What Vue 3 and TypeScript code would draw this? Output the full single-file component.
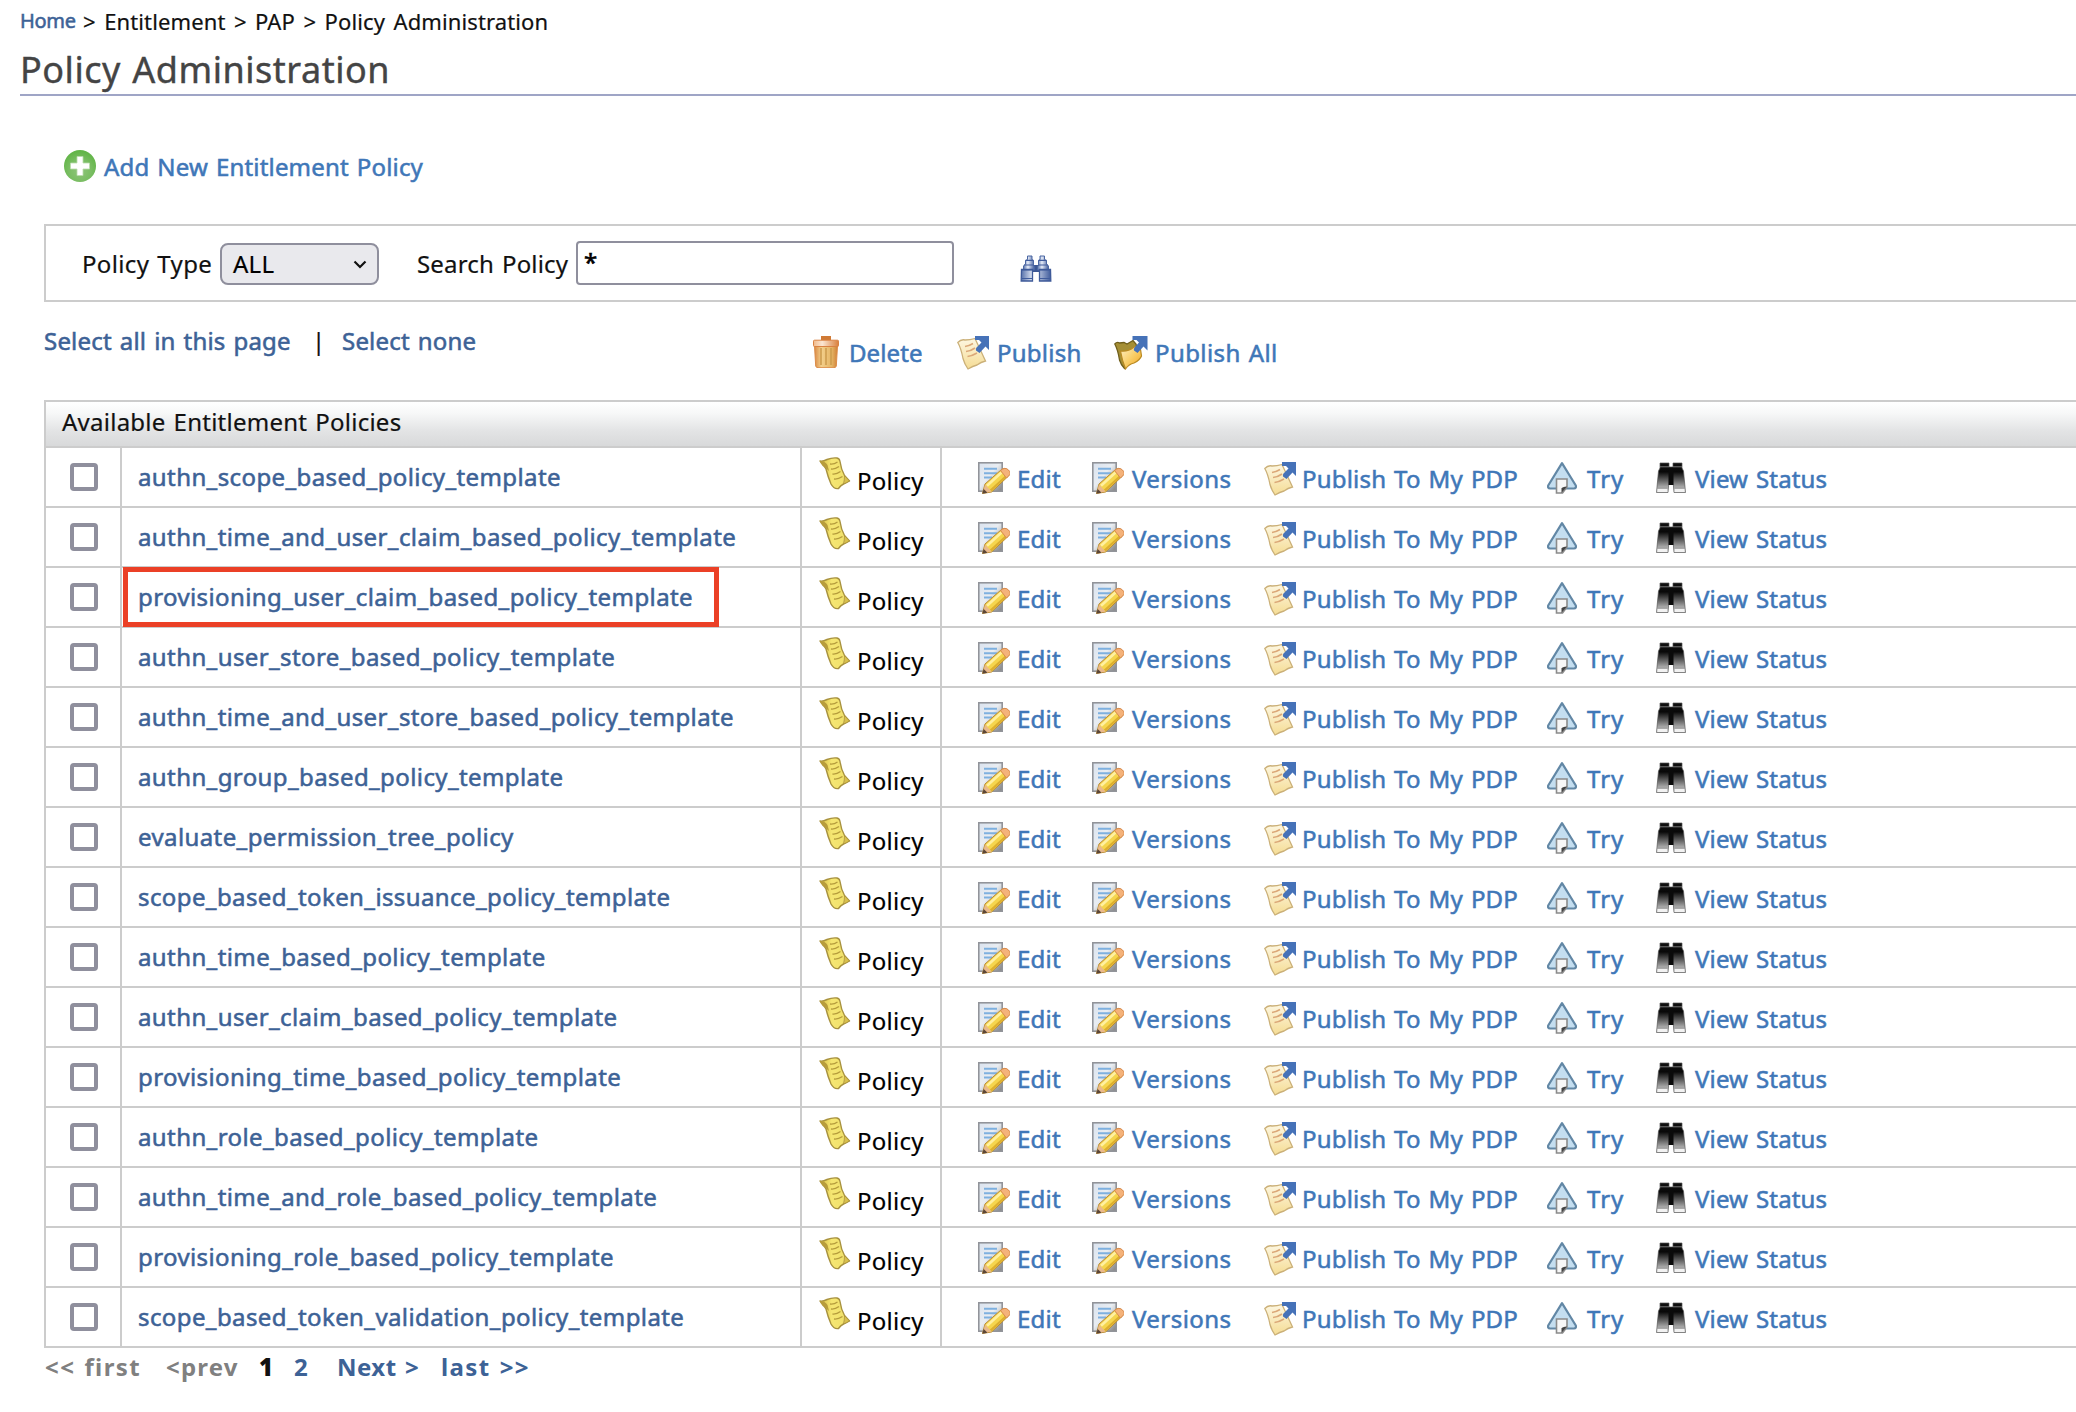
<script setup lang="ts">
import { ref } from 'vue'

interface Action {
  label: string
  icon: string
  cls: string
}

const policies: string[] = [
  'authn_scope_based_policy_template',
  'authn_time_and_user_claim_based_policy_template',
  'provisioning_user_claim_based_policy_template',
  'authn_user_store_based_policy_template',
  'authn_time_and_user_store_based_policy_template',
  'authn_group_based_policy_template',
  'evaluate_permission_tree_policy',
  'scope_based_token_issuance_policy_template',
  'authn_time_based_policy_template',
  'authn_user_claim_based_policy_template',
  'provisioning_time_based_policy_template',
  'authn_role_based_policy_template',
  'authn_time_and_role_based_policy_template',
  'provisioning_role_based_policy_template',
  'scope_based_token_validation_policy_template',
]
const highlighted = 'provisioning_user_claim_based_policy_template'

const actions: Action[] = [
  { label: 'Edit', icon: 'i-edit', cls: 'edit' },
  { label: 'Versions', icon: 'i-edit', cls: 'versions' },
  { label: 'Publish To My PDP', icon: 'i-publish', cls: 'pdp' },
  { label: 'Try', icon: 'i-try', cls: 'try' },
  { label: 'View Status', icon: 'i-view', cls: 'view' },
]

const search = ref('*')
const checked = ref<string[]>([])
</script>

<template>
  <svg class="defs" aria-hidden="true">
    <defs>
      <radialGradient id="g-add" cx=".5" cy=".65" r=".6">
        <stop offset="0" stop-color="#8fc47a" />
        <stop offset=".6" stop-color="#79bd62" />
        <stop offset="1" stop-color="#62b548" />
      </radialGradient>
      <linearGradient id="g-page" x1="0" y1="0" x2="1" y2="1">
        <stop offset="0" stop-color="#d9e2ee" />
        <stop offset=".45" stop-color="#e9edf2" />
        <stop offset="1" stop-color="#808080" />
      </linearGradient>
      <linearGradient id="g-note" x1="0" y1="0" x2="0" y2="1">
        <stop offset="0" stop-color="#fdf7e2" />
        <stop offset="1" stop-color="#f5dc94" />
      </linearGradient>
      <linearGradient id="g-folder" x1="0" y1="0" x2="1" y2="1">
        <stop offset="0" stop-color="#fdf0c8" />
        <stop offset=".5" stop-color="#f9cf6a" />
        <stop offset="1" stop-color="#f3a41c" />
      </linearGradient>
      <linearGradient id="g-can" x1="0" y1="0" x2="1" y2="0">
        <stop offset="0" stop-color="#d98a45" />
        <stop offset=".3" stop-color="#f3cf8b" />
        <stop offset=".75" stop-color="#e5b565" />
        <stop offset="1" stop-color="#d08036" />
      </linearGradient>
      <linearGradient id="g-lid" x1="0" y1="0" x2="1" y2="0">
        <stop offset="0" stop-color="#f0b98a" />
        <stop offset=".35" stop-color="#fbe6d2" />
        <stop offset="1" stop-color="#d9803c" />
      </linearGradient>
      <linearGradient id="g-view" x1="0" y1="0" x2="0" y2="1">
        <stop offset="0" stop-color="#111" />
        <stop offset=".3" stop-color="#080808" />
        <stop offset=".85" stop-color="#b4b4b4" />
        <stop offset="1" stop-color="#ddd" />
      </linearGradient>
      <linearGradient id="g-find" x1="0" y1="0" x2="1" y2="0">
        <stop offset="0" stop-color="#5671aa" />
        <stop offset=".4" stop-color="#e6ecf8" />
        <stop offset="1" stop-color="#405c9c" />
      </linearGradient>
      <linearGradient id="g-scroll" x1="0" y1="0" x2="1" y2="0">
        <stop offset="0" stop-color="#d8bd45" />
        <stop offset=".4" stop-color="#f5e672" />
        <stop offset="1" stop-color="#efdf68" />
      </linearGradient>
    </defs>
    <symbol id="i-add" viewBox="0 0 32 32">
      <circle cx="16" cy="16" r="16" fill="url(#g-add)" />
      <path d="M13 6.500h6v6.500h6.500v6H19v6.500h-6v-6.500H6.500v-6H13z" fill="#fff" stroke="#b9dcab" stroke-width=".8" />
    </symbol>
    <symbol id="i-edit" viewBox="0 0 32 32">
      <rect x=".8" y=".8" width="23.400" height="28.400" fill="url(#g-page)" stroke="#92949a" stroke-width="1.600" />
      <path d="M6 6.800h13M6 11.200h13M6 15.600h8" stroke="#7eb0df" stroke-width="2" />
      <path d="M4.500 31.500L7 22L23.500 7.500Q27 5 30 8T30.500 14L13.500 30Z" fill="#f5d54d" stroke="#b98a35" stroke-width="1" />
      <path d="M9 23.800L23.500 10.500" stroke="#fff0a0" stroke-width="2.600" />
      <path d="M12.500 28.500L27.500 14.800" stroke="#dcae2e" stroke-width="2.200" />
      <path d="M22.500 8.500Q27 4.500 30.500 8T30.500 14L28.500 16Z" fill="#f4b27a" stroke="#d98b50" stroke-width="1" />
      <path d="M7 22.500L13.500 29.500L5 31.500Z" fill="#e9b98c" />
      <path d="M5.700 27L9.500 30.800L4.300 31.800Z" fill="#5b4638" />
    </symbol>
    <symbol id="i-publish" viewBox="0 0 34 34">
      <path d="M.8 6.500Q4 3 8 4Q13 4 18 2.500L22 11L28.500 25Q24 26 20 29Q16 30 11 33Q7.500 28 6 22.500Q4 12 .8 6.500Z" fill="url(#g-note)" stroke="#cbb078" stroke-width="1.300" />
      <path d="M8 10.500Q12 10 16 7.500M9 15.500Q14 15 18 12M10.500 20.500Q15 20 20 17" fill="none" stroke="#dba878" stroke-width="1.600" />
      <path d="M18 0H32V14L28.500 10.500L22.500 17L19 14.500Q18.500 13 19.500 11.500L24.500 6.500L22 4L18 4Z" fill="#4672b8" />
    </symbol>
    <symbol id="i-folder" viewBox="0 0 34 34">
      <path d="M.8 8Q3 5.500 5.500 7L10 6.500L13 8L19 4.500L22 8L24 15L10.500 32.500Q7 29 5.500 24Q4 14 .8 8Z" fill="#a58f35" stroke="#6f5e1b" stroke-width="1.300" />
      <path d="M6.500 15Q14 16 20 11L26 10L27.500 20Q26 24 20 27Q15 28 11.500 33Q8 24 6.500 15Z" fill="url(#g-folder)" stroke="#b98a22" stroke-width="1.200" />
      <path d="M18.500 0H33.500V14.500L29.500 10.500L23.500 17L20 14.500Q19.500 13 20.500 11.500L25 6.500L22.500 4H18.500Z" fill="#4672b8" />
    </symbol>
    <symbol id="i-delete" viewBox="0 0 26 32">
      <rect x="8" y="0" width="10" height="4.500" fill="#d07a35" />
      <path d="M1.500 10H24.500L23.300 30Q23 31.700 21 31.700H5Q3 31.700 2.700 30Z" fill="url(#g-can)" stroke="#dc8c48" stroke-width="1" />
      <path d="M8 12V29M13 12V29M18 12V29" stroke="#cb9a4c" stroke-width="1.500" />
      <rect x=".5" y="4.200" width="25" height="6.300" rx="1" fill="url(#g-lid)" stroke="#d98242" stroke-width="1" />
    </symbol>
    <symbol id="i-try" viewBox="0 0 30 32">
      <path d="M15 1.200L28.800 23.500Q29.500 26.300 27 26.500H3Q.5 26.300 1.200 23.500Z" fill="#c4def0" stroke="#6287a5" stroke-width="2.200" stroke-linejoin="round" />
      <path d="M9.500 17H20V25L15.500 31H9.500Z" fill="#f7f7f7" stroke="#8b8b8b" stroke-width="1.600" />
      <path d="M20 24.500L14.500 31V26.500Q15 25 20 24.500Z" fill="#444" />
    </symbol>
    <symbol id="i-view" viewBox="0 0 30 32">
      <path d="M4 1H13V5H17V1H26V6L27.500 9L29.500 30.500H18L17 19H13L12 30.500H.5L2.500 9L4 6Z" fill="url(#g-view)" stroke="#555" stroke-width=".7" />
      <path d="M12.500 7H17.500V23H12.500z" fill="#0a0a0a" />
      <path d="M4 4.800H13M17 4.800H26" stroke="#777" stroke-width="1" />
      <path d="M1.700 26H11.500M18.500 26H28.300" stroke="#999" stroke-width="1" />
      <path d="M1.500 27H11.300V30H1.500zM18.700 27H28.500V30H18.700z" fill="#f2f2f2" />
    </symbol>
    <symbol id="i-find" viewBox="0 0 32 27">
      <path d="M12 10H20V17H12z" fill="#3c5793" />
      <path d="M7.500 1H12V4.500L13.500 5.500V9.500L14.500 11.500V15H3.500V11L5.500 9V5.500L7.500 4.500Z" fill="url(#g-find)" stroke="#4a66a2" stroke-width="1" />
      <path d="M20 1H24.500V4.500L26.500 5.500V9L28.500 11V15H17.500V11.500L18.500 9.500V5.500L20 4.500Z" fill="url(#g-find)" stroke="#4a66a2" stroke-width="1" />
      <path d="M1.500 14.500H12.500V26H1.200zM19.500 14.500H30.500L30.800 26H19.500z" fill="url(#g-find)" stroke="#3e5a99" stroke-width="1.300" />
      <path d="M5.500 5.300H13.500M18.500 5.300H26.500M4 10H14M18 10H28M1.500 15H12.500M19.500 15H30.500M1.500 23.500H12.500M19.500 23.500H30.500" stroke="#405c9c" stroke-width="1.200" />
    </symbol>
    <symbol id="i-scroll" viewBox="0 0 32 33">
      <path d="M1 4Q4 4.500 8 2.500Q13 .5 18 1Q20.500 1.500 21 4.500Q22 12 25.500 18.500L30.500 24Q27 26 24.500 27Q21.500 28.500 19.500 31.500Q15 32.500 12 27Q9 20 7 12Q5 8 1 4Z" fill="url(#g-scroll)" stroke="#a8923f" stroke-width="1.400" stroke-linejoin="round" />
      <path d="M1 4Q6 4 8.500 8L10 14L6 10.500Q3 9 1.500 6Z" fill="#b79c3c" />
      <path d="M11 7Q15 7.500 18.500 5M12 12Q16 12.500 20 9.500M13.500 17Q17.500 17.500 21.500 14.500M15 22Q19 22.500 23.500 19.500" fill="none" stroke="#b59c3c" stroke-width="1.300" />
      <path d="M25.500 18.500L30.500 24Q27 26 24.500 27Q25.500 23 25.500 18.500Z" fill="#d9c04c" stroke="#a8923f" stroke-width=".8" />
    </symbol>
  </svg>

  <div class="page">
    <nav class="crumbs"><a class="home">Home</a><span>&gt; Entitlement &gt; PAP &gt; Policy Administration</span></nav>
    <h2 class="title">Policy Administration</h2>

    <main class="work">
      <a class="add link"><svg><use href="#i-add" /></svg><span>Add New Entitlement Policy</span></a>

      <form class="filter" @submit.prevent>
        <label class="l-type">Policy Type</label>
        <div class="select"><span>ALL</span><svg viewBox="0 0 14 9"><path d="M1.500 1.500L7 7L12.500 1.500" fill="none" stroke="#111" stroke-width="2.200" /></svg></div>
        <label class="l-search">Search Policy</label>
        <input v-model="search" type="text" class="search" />
        <svg class="find"><use href="#i-find" /></svg>
      </form>

      <div class="toolbar">
        <div class="selectors"><a class="s-all">Select all in this page</a><span class="bar">|</span><a>Select none</a></div>
        <div class="bulk link">
          <a class="b-del"><svg><use href="#i-delete" /></svg><span>Delete</span></a>
          <a class="b-pub"><svg><use href="#i-publish" /></svg><span>Publish</span></a>
          <a class="b-all"><svg><use href="#i-folder" /></svg><span>Publish All</span></a>
        </div>
      </div>

      <section class="grid">
        <header>Available Entitlement Policies</header>
        <div v-for="p in policies" :key="p" class="row">
          <div class="c-check"><input v-model="checked" type="checkbox" :value="p" /></div>
          <div class="c-name" :class="{ marked: p === highlighted }"><a>{{ p }}</a></div>
          <div class="c-type"><svg><use href="#i-scroll" /></svg><span>Policy</span></div>
          <div class="c-actions link">
            <a v-for="a in actions" :key="a.label" :class="a.cls"><svg><use :href="'#' + a.icon" /></svg><span>{{ a.label }}</span></a>
          </div>
        </div>
      </section>

      <div class="pager">
        <span class="off first">&lt;&lt; first</span><span class="off prev">&lt;prev</span><b class="cur">1</b><a class="two">2</a><a class="next">Next &gt;</a><a class="last">last &gt;&gt;</a>
      </div>
    </main>
  </div>
</template>

<style>
body {
  margin: 0;
  background: #fff;
  overflow: hidden;
}
</style>

<style scoped>
.defs {
  position: absolute;
  width: 0;
  height: 0;
}
.page {
  box-sizing: border-box;
  height: 1412px;
  padding-left: 20px;
  overflow: hidden;
  color: #111;
  font: 24px/30px "Noto Sans", "Open Sans", sans-serif;
  letter-spacing: 0.25px;
  word-spacing: 1.5px;
  white-space: nowrap;
  -webkit-text-stroke: 0.2px currentColor;
}
svg {
  display: block;
  flex: none;
}
a {
  color: #3d6296;
  -webkit-text-stroke: 0.55px currentColor;
}
.link a,
a.link {
  color: #3f77b8;
}
.crumbs {
  display: flex;
  height: 44px;
  padding-top: 6px;
  box-sizing: border-box;
  font-size: 22px;
}
.home {
  width: 63px;
  font-size: 20px;
  letter-spacing: -0.3px;
}
.crumbs span {
  word-spacing: 2.6px;
  letter-spacing: 0.12px;
}
.title {
  box-sizing: border-box;
  height: 52px;
  margin: 0;
  border-bottom: 2px solid #9fa5c6;
  color: #444;
  font-size: 36px;
  font-weight: 400;
  line-height: 52px;
  letter-spacing: 0.52px;
  -webkit-text-stroke: 0.4px currentColor;
}
.work {
  padding-left: 24px;
}
.add {
  display: flex;
  height: 128px;
  padding: 54px 0 0 20px;
  box-sizing: border-box;
}
.add svg {
  width: 32px;
  height: 32px;
}
.add span {
  margin: 2px 0 0 8px;
  letter-spacing: 0.18px;
}
.filter {
  display: flex;
  box-sizing: border-box;
  width: 2100px;
  height: 78px;
  padding: 15px 0 0 36px;
  border: 2px solid #ccc;
}
.l-type {
  width: 138px;
  padding-top: 8px;
  letter-spacing: 0.35px;
}
.select {
  display: flex;
  align-items: center;
  justify-content: space-between;
  box-sizing: border-box;
  width: 159px;
  height: 42px;
  margin-top: 2px;
  padding: 0 10px 0 11px;
  border: 2px solid #8f8f9d;
  border-radius: 8px;
  background: #e9e9ed;
  color: #000;
}
.select svg {
  width: 14px;
  height: 9px;
}
.l-search {
  width: 159px;
  padding: 8px 0 0 38px;
  letter-spacing: 0.18px;
}
.search {
  box-sizing: border-box;
  width: 378px;
  height: 44px;
  padding: 0 6px 4px;
  border: 2px solid #8f8f9d;
  border-radius: 4px;
  outline: none;
  color: #000;
  font: 24px "Noto Sans", sans-serif;
  -webkit-text-stroke: 0.6px #000;
}
.find {
  width: 32px;
  height: 27px;
  margin: 14px 0 0 66px;
}
.toolbar {
  display: flex;
  height: 98px;
}
.selectors {
  display: flex;
  width: 768px;
  padding-top: 24px;
  letter-spacing: 0.2px;
}
.s-all {
  width: 268px;
}
.bar {
  width: 30px;
}
.bulk {
  display: flex;
  padding-top: 34px;
}
.bulk a {
  display: flex;
}
.bulk span {
  margin-top: 2px;
}
.b-del {
  width: 145px;
}
.b-del svg {
  width: 28px;
  height: 32px;
  margin-right: 9px;
}
.b-del span {
  letter-spacing: 0.1px;
}
.b-pub {
  width: 157px;
}
.b-pub svg,
.b-all svg {
  width: 34px;
  height: 34px;
  margin-right: 6px;
}
.b-all svg {
  margin-right: 7px;
}
.b-all span {
  letter-spacing: 0.4px;
}
.grid {
  box-sizing: border-box;
  width: 2100px;
  border: 2px solid #ccc;
  border-bottom: 0;
}
.grid header {
  height: 44px;
  padding-left: 16px;
  border-bottom: 2px solid #ccc;
  background: linear-gradient(#fff 0%, #f7f8f8 25%, #e3e4e5 65%, #d8d9da 100%);
  line-height: 40px;
}
.row {
  display: flex;
  box-sizing: border-box;
  height: 60px;
  border-bottom: 2px solid #ccc;
}
.row > div {
  box-sizing: border-box;
  border-right: 2px solid #ccc;
}
.c-check {
  width: 76px;
  padding: 15px 0 0 24px;
}
.c-check input {
  display: block;
  width: 28px;
  height: 28px;
  margin: 0;
  border: 4px solid #8f8f9d;
  border-radius: 4px;
  appearance: none;
  background: #fff;
  box-sizing: border-box;
}
.c-name {
  position: relative;
  width: 680px;
  padding: 14px 0 0 16px;
  letter-spacing: 0.4px;
}
.marked::after {
  content: "";
  position: absolute;
  top: -1px;
  left: 1px;
  box-sizing: border-box;
  width: 596px;
  height: 60px;
  border: 5px solid #eb4026;
}
.c-type {
  display: flex;
  width: 140px;
  padding: 9px 0 0 17px;
  color: #000;
}
.c-type svg {
  width: 32px;
  height: 33px;
}
.c-type span {
  margin: 9px 0 0 6px;
}
.c-actions {
  display: flex;
  flex: 1;
  padding: 14px 0 0 36px;
}
.c-actions a {
  display: flex;
}
.c-actions svg {
  width: 32px;
  height: 32px;
}
.edit {
  width: 114px;
}
.edit span {
  margin-left: 7px;
}
.versions span {
  margin-left: 8px;
  letter-spacing: 0.45px;
}
.versions {
  width: 172px;
}
.pdp {
  width: 283px;
}
.c-actions .pdp svg {
  width: 34px;
  height: 34px;
}
.pdp span {
  margin-left: 4px;
  letter-spacing: 0.19px;
}
.try {
  width: 109px;
}
.c-actions .try svg,
.c-actions .view svg {
  width: 30px;
}
.try span {
  margin-left: 10px;
  letter-spacing: 1px;
}
.view span {
  margin-left: 9px;
  letter-spacing: 0.15px;
}
.c-actions span {
  margin-top: 2px;
}
.pager {
  display: flex;
  padding: 4px 0 0 1px;
  font-weight: 700;
  -webkit-text-stroke: 0;
}
.pager a {
  -webkit-text-stroke: 0;
}
.off {
  color: #808080;
}
.first {
  width: 121px;
  letter-spacing: 1.4px;
}
.prev {
  width: 93px;
  letter-spacing: 1.2px;
}
.cur {
  width: 35px;
}
.two {
  width: 43px;
}
.next {
  width: 104px;
  letter-spacing: 0.5px;
}
.last {
  letter-spacing: 1.4px;
}
</style>
